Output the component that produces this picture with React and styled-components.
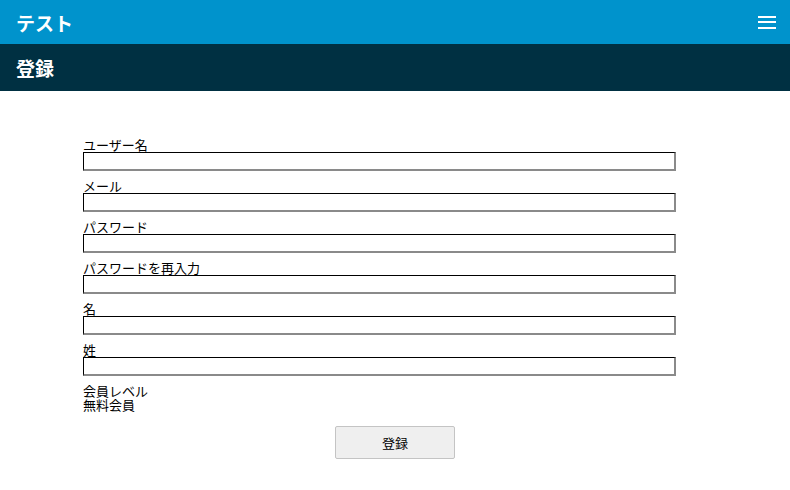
import React from "react";
import styled, { createGlobalStyle } from "styled-components";

const GlobalStyle = createGlobalStyle`
  body {
    margin: 0;
    background: #ffffff;
    font-family: "Noto Sans CJK JP", "Noto Sans", sans-serif;
  }
`;

const fields = [
  { label: "ユーザー名", type: "text" },
  { label: "メール", type: "email" },
  { label: "パスワード", type: "password" },
  { label: "パスワードを再入力", type: "password" },
  { label: "名", type: "text" },
  { label: "姓", type: "text" },
];

function App() {
  return (
    <>
      <GlobalStyle />
      <TopBar>
        <Brand>テスト</Brand>
        <MenuButton aria-label="menu">
          <span />
          <span />
          <span />
        </MenuButton>
      </TopBar>
      <PageTitle>登録</PageTitle>
      <Form onSubmit={(e) => e.preventDefault()}>
        {fields.map((f) => (
          <Field key={f.label}>
            <Label>{f.label}</Label>
            <Input type={f.type} />
          </Field>
        ))}
        <Plan>
          <div>会員レベル</div>
          <div>無料会員</div>
        </Plan>
        <ButtonRow>
          <SubmitButton type="submit">登録</SubmitButton>
        </ButtonRow>
      </Form>
    </>
  );
}

const TopBar = styled.header`
  display: flex;
  align-items: center;
  justify-content: space-between;
  height: 44px;
  padding: 0 14px 0 16px;
  background: #0093cc;
  color: #ffffff;
`;

const Brand = styled.div`
  font-size: 19px;
  font-weight: 700;
`;

const MenuButton = styled.div`
  display: flex;
  flex-direction: column;
  gap: 3.5px;
  width: 18px;

  span {
    display: block;
    height: 2px;
    background: #ffffff;
  }
`;

const PageTitle = styled.h1`
  margin: 0;
  height: 47px;
  display: flex;
  align-items: center;
  padding-left: 16px;
  background: #003042;
  color: #ffffff;
  font-size: 19px;
  font-weight: 700;
`;

const Form = styled.form`
  display: flex;
  flex-direction: column;
  padding: 47px 0 0 83px;
`;

const Field = styled.div`
  display: flex;
  flex-direction: column;
  width: 593px;
  margin-bottom: 8px;
`;

const Label = styled.label`
  font-size: 13px;
  line-height: 14px;
  color: #000000;
`;

const Input = styled.input`
  box-sizing: border-box;
  height: 19px;
  width: 100%;
  margin: 0;
  border-style: solid;
  border-color: #000000 #8a8a8a #8a8a8a #000000;
  border-width: 1px 2px 2px 1px;
  padding: 0 2px;
  font-size: 13px;
`;

const Plan = styled.div`
  font-size: 13px;
  line-height: 14px;
  color: #000000;
  margin-top: 0;
`;

const ButtonRow = styled.div`
  display: flex;
  justify-content: center;
  margin: 14px 0 0 -83px;
`;

const SubmitButton = styled.button`
  width: 120px;
  height: 33px;
  background: #efefef;
  border: 1px solid #c4c4c4;
  border-radius: 2px;
  font-family: "Noto Sans CJK JP", sans-serif;
  font-size: 13px;
  color: #000000;
  cursor: pointer;
`;

export default App;
